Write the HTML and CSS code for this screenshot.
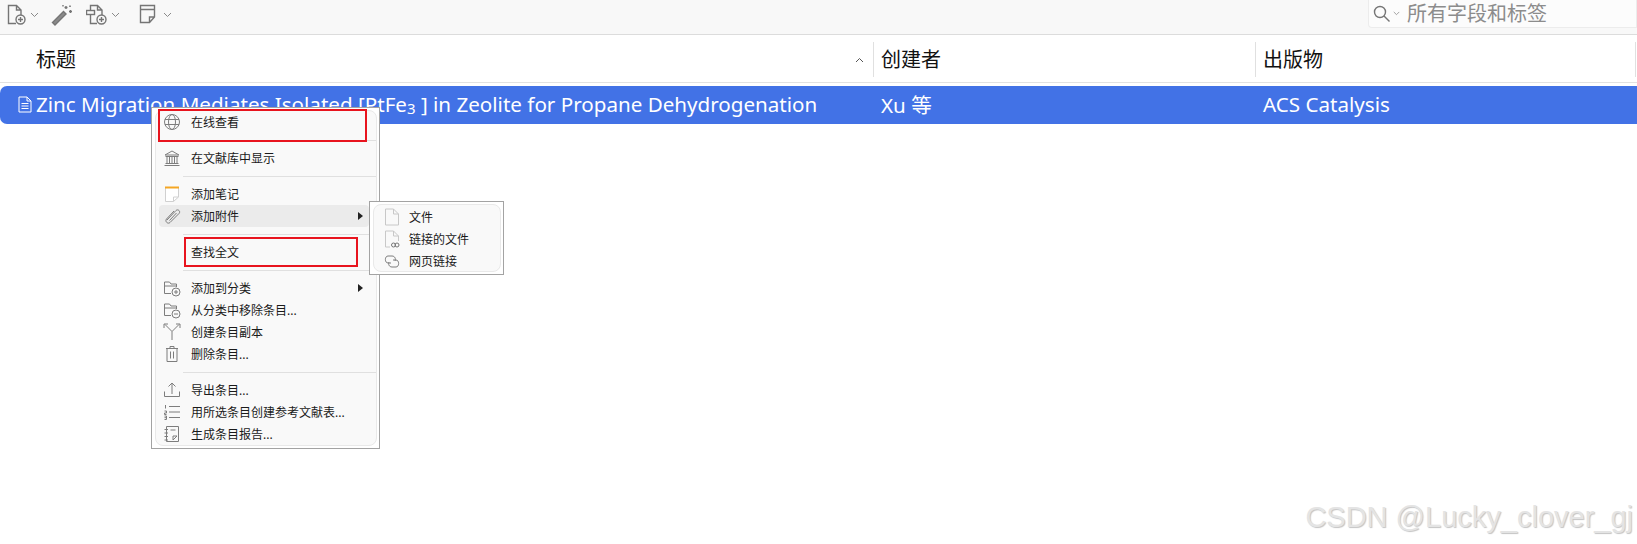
FILE: index.html
```html
<!DOCTYPE html>
<html lang="zh-CN">
<head>
    <meta charset="UTF-8">
    <title>Zotero</title>
    <link rel="stylesheet" href="styles.css">
</head>
<body>
    <div class="toolbar">
        <div class="tools">
            <button class="tool tool-new">
                <svg class="tb-icon" width="20" height="22" viewBox="0 0 20 22"><path d="M9 19.5H1.5V1.5H9.5L14 6V11M9.5 1.5V6H14"/><circle cx="13.5" cy="15.5" r="4.5"/><path d="M13.5 13V18M11 15.5H16"/></svg>
                <svg class="chev" width="9" height="6" viewBox="0 0 9 6"><path d="M1 1L4.5 4.5L8 1"/></svg>
            </button>
            <button class="tool tool-wand">
                <svg class="tb-icon" width="22" height="22" viewBox="0 0 22 22"><path d="M1.5 18.5L12.5 7.5L15 10L4 21Z" fill="#8a8a8a"/><path d="M15 2V5M13.5 3.5H16.5M19.5 6V9M18 7.5H21M19 1.5V3M18.2 2.2H19.8M12 1V2.5"/></svg>
            </button>
            <button class="tool tool-attach">
                <svg class="tb-icon" width="22" height="22" viewBox="0 0 22 22"><path d="M11 19.5H4.5V1.5H11.5L16 6V11M11.5 1.5V6H16"/><rect x="0.5" y="6.5" width="8" height="4" fill="#f8f8f8"/><circle cx="15.5" cy="15.5" r="4.5" fill="#f8f8f8"/><path d="M15.5 13V18M13 15.5H18"/></svg>
                <svg class="chev" width="9" height="6" viewBox="0 0 9 6"><path d="M1 1L4.5 4.5L8 1"/></svg>
            </button>
            <button class="tool tool-note">
                <svg class="tb-icon" width="18" height="20" viewBox="0 0 18 20"><path d="M1.5 1.5H15.5V13L10.5 18.5H1.5ZM1.5 5.5H15.5M10.5 18.5V13H15.5"/></svg>
                <svg class="chev" width="9" height="6" viewBox="0 0 9 6"><path d="M1 1L4.5 4.5L8 1"/></svg>
            </button>
        </div>
        <div class="search">
            <svg class="tb-icon" width="18" height="18" viewBox="0 0 18 18"><circle cx="7" cy="7" r="5.5"/><path d="M11 11L16.5 16.5"/></svg>
            <svg class="chev chev-small" width="7" height="5" viewBox="0 0 9 6"><path d="M1 1L4.5 4.5L8 1"/></svg>
            <span class="search-text">所有字段和标签</span>
        </div>
    </div>

    <div class="table-head">
        <div class="col col-title">标题<svg class="sort" width="9" height="6" viewBox="0 0 9 6"><path d="M1 5L4.5 1.5L8 5"/></svg></div>
        <div class="col col-creator">创建者</div>
        <div class="col col-pub">出版物</div>
    </div>

    <div class="table-row">
        <div class="cell cell-title">
            <svg class="row-icon" width="14" height="17" viewBox="0 0 14 17"><path d="M1 1H9L13 5V16H1ZM9 1V5H13M3.5 7.5H10.5M3.5 10H10.5M3.5 12.5H10.5"/></svg>
            <span>Zinc Migration Mediates Isolated [PtFe<span class="sub3">3</span> ] in Zeolite for Propane Dehydrogenation</span>
        </div>
        <div class="cell cell-creator">Xu 等</div>
        <div class="cell cell-pub">ACS Catalysis</div>
    </div>

    <div class="menu main-menu">
        <div class="panel">
            <div class="item">
                <svg class="ic" width="18" height="18" viewBox="0 0 18 18"><circle cx="9" cy="9" r="7.5"/><ellipse cx="9" cy="9" rx="3.5" ry="7.5"/><path d="M2 6.5H16M2 11.5H16"/></svg>
                在线查看
            </div>
            <div class="sep"></div>
            <div class="item">
                <svg class="ic" width="18" height="18" viewBox="0 0 18 18"><path d="M2 6L9 2L16 6ZM2.5 7.5H15.5M4 8V14M6.5 8V14M9 8V14M11.5 8V14M14 8V14M2.5 14.5H15.5M1.5 16.5H16.5"/></svg>
                在文献库中显示
            </div>
            <div class="sep"></div>
            <div class="item">
                <svg class="ic" width="18" height="18" viewBox="0 0 18 18"><path class="note-body" d="M2.5 2.5H15.5V12L10.5 16.5H2.5ZM10.5 16.5V12H15.5"/><path class="note-top" d="M2 2.5H16"/></svg>
                添加笔记
            </div>
            <div class="item active">
                <svg class="ic" width="18" height="18" viewBox="0 0 18 18"><path d="M4 13L13 3.5C15 1.5 18 4.5 16 6.5L7 15.5C5 17.5 1.5 14.5 3.5 12L11 4"/><path d="M6.5 13.5L13.5 6"/></svg>
                添加附件
                <span class="arrow"></span>
            </div>
            <div class="sep"></div>
            <div class="item">
                <span class="ic"></span>
                查找全文
            </div>
            <div class="sep"></div>
            <div class="item">
                <svg class="ic" width="18" height="18" viewBox="0 0 18 18"><path d="M8 14.5H1.5V3H6.5L8 5H13.5V8M1.5 7H13.5"/><circle cx="13" cy="13" r="4" class="ic-badge"/><path d="M11 13H15M13 11V15"/></svg>
                添加到分类
                <span class="arrow"></span>
            </div>
            <div class="item">
                <svg class="ic" width="18" height="18" viewBox="0 0 18 18"><path d="M8 14.5H1.5V3H6.5L8 5H13.5V8M1.5 7H13.5"/><circle cx="13" cy="13" r="4" class="ic-badge"/><path d="M11 13H15"/></svg>
                从分类中移除条目...
            </div>
            <div class="item">
                <svg class="ic" width="18" height="18" viewBox="0 0 18 18"><path d="M2 1.5L9 8.5L16 1.5M9 8.5V17M1 5V1H5M13 1H17V5"/></svg>
                创建条目副本
            </div>
            <div class="item">
                <svg class="ic" width="18" height="18" viewBox="0 0 18 18"><path d="M3 3.5H15M7 3.5V1.5H11V3.5M4 3.5V16.5H14V3.5M7.5 6.5V13.5M10.5 6.5V13.5"/></svg>
                删除条目...
            </div>
            <div class="sep"></div>
            <div class="item">
                <svg class="ic" width="18" height="18" viewBox="0 0 18 18"><path d="M9 13V2M5.5 5.5L9 2L12.5 5.5M1.5 10.5V15.5H16.5V10.5"/></svg>
                导出条目...
            </div>
            <div class="item">
                <svg class="ic" width="18" height="18" viewBox="0 0 18 18"><path d="M6 3.5H17M6 9H17M6 14.5H17M2.5 2V5.5M1.5 8H3.5V10H1.5V11.5H3.5M1.5 13H3.5V16.5H1.5M1.5 14.7H3.5"/></svg>
                用所选条目创建参考文献表...
            </div>
            <div class="item">
                <svg class="ic" width="18" height="18" viewBox="0 0 18 18"><path d="M3.5 1.5H15.5V16.5H3.5ZM1.5 4.5H5M1.5 8H5M1.5 11.5H5M1.5 15H5M7.5 5H12.5M10 15V11H14M10 15L14 11"/></svg>
                生成条目报告...
            </div>
        </div>
    </div>

    <div class="menu sub-menu">
        <div class="panel">
            <div class="item">
                <svg class="ic ic-light" width="16" height="18" viewBox="0 0 16 18"><path d="M1.5 1H9.5L14.5 6V17H1.5ZM9.5 1V6H14.5"/></svg>
                文件
            </div>
            <div class="item">
                <svg class="ic ic-light" width="16" height="18" viewBox="0 0 16 18"><path d="M6 17H1.5V1H9.5L14.5 6V11M9.5 1V6H14.5"/><circle class="ic-dark" cx="9.5" cy="15" r="2"/><circle class="ic-dark" cx="13" cy="15" r="2"/></svg>
                链接的文件
            </div>
            <div class="item">
                <svg class="ic" width="18" height="18" viewBox="0 0 18 18"><path d="M8 11H5C1.5 11 1.5 4 5 4H9C12 4 13 7 12 9M10 8H13C16.5 8 16.5 15 13 15H9C6 15 5 12 6 10"/></svg>
                网页链接
            </div>
        </div>
    </div>

    <div class="mark mark-view"></div>
    <div class="mark mark-find"></div>

    <div class="watermark">CSDN @Lucky_clover_gj</div>
</body>
</html>
```

FILE: styles.css
```css
* {
    box-sizing: border-box;
}
body {
    margin: 0;
    height: 544px;
    overflow: hidden;
    position: relative;
    background: #fff;
    color: #1a1a1a;
    font-family: "Noto Sans", "Noto Sans CJK SC", sans-serif;
}
svg {
    display: block;
    fill: none;
}

/* toolbar */
.toolbar {
    height: 35px;
    display: flex;
    justify-content: space-between;
    background: #f8f8f8;
    border-bottom: 1px solid #dcdcdc;
}
.tools {
    display: flex;
    padding: 4px 0 0 7px;
}
.tool {
    display: flex;
    align-items: flex-start;
    gap: 3px;
    padding: 0;
    border: 0;
    background: none;
}
.tool .chev {
    margin-top: 8px;
}
.tool-new {
    width: 44px;
}
.tool-wand {
    width: 35px;
}
.tool-attach {
    width: 53px;
}
.tool-note .chev {
    margin-left: 3px;
}
.tb-icon path,
.tb-icon circle,
.tb-icon rect {
    stroke: #757575;
    stroke-width: 1.4;
}
.chev path {
    stroke: #8a8a8a;
    stroke-width: 1;
}
.search {
    width: 269px;
    height: 28px;
    display: flex;
    align-items: center;
    padding-left: 4px;
    background: #fcfcfc;
    border: 1px solid #ececec;
    border-top: 0;
    border-radius: 0 0 0 4px;
}
.chev-small {
    margin-left: 2px;
}
.search-text {
    margin-left: 7px;
    font-size: 20px;
    line-height: 26px;
    color: #8c8c8c;
}

/* table */
.table-head {
    height: 48px;
    display: grid;
    grid-template-columns: 874px 382px 1fr;
    padding: 7px 0 5px;
    border-bottom: 1px solid #e2e2e2;
    font-size: 20px;
    color: #111;
}
.col {
    display: flex;
    align-items: center;
    line-height: 34px;
    padding-left: 7px;
    border-right: 1px solid #e0e0e0;
}
.col-title {
    justify-content: space-between;
    padding: 0 9px 0 36px;
}
.col-pub {
    margin-right: 1px;
}
.sort path {
    stroke: #555;
}
.table-row {
    height: 38px;
    margin-top: 3px;
    padding-bottom: 2px;
    display: grid;
    grid-template-columns: 873px 382px 1fr;
    align-items: center;
    background: #4272e6;
    border-radius: 7px 0 0 7px;
    color: #fff;
    font-size: 20.6px;
}
.cell {
    padding-left: 8px;
    white-space: nowrap;
}
.cell-title {
    display: flex;
    align-items: center;
    gap: 4px;
    padding-left: 18px;
}
.row-icon path {
    stroke: #fff;
    stroke-width: 1;
}
.sub3 {
    font-size: 15px;
    vertical-align: -2px;
}

/* context menus */
.menu {
    position: absolute;
    padding: 2px 2px 2px 3px;
    background: #fff;
    border: 1px solid #a3a3a3;
}
.main-menu {
    left: 151px;
    top: 107px;
    width: 229px;
    height: 342px;
}
.sub-menu {
    left: 369px;
    top: 201px;
    width: 135px;
    height: 74px;
}
.panel {
    height: 100%;
    background: #f9f9f9;
    border: 1px solid #e9e9e9;
    border-radius: 8px;
    font-size: 12px;
}
.item {
    height: 22px;
    margin: 0 7px 0 3px;
    padding: 0 4px;
    display: flex;
    align-items: center;
    gap: 10px;
    border-radius: 4px;
    white-space: nowrap;
}
.item.active {
    background: #ebebeb;
}
.arrow {
    margin-left: auto;
    margin-right: 2px;
    border-left: 5px solid #222;
    border-top: 4px solid transparent;
    border-bottom: 4px solid transparent;
}
.sep {
    height: 14px;
    margin-left: 27px;
    position: relative;
}
.sep::after {
    content: "";
    position: absolute;
    left: 0;
    right: 0;
    top: 7px;
    border-top: 1px solid #e0e0e0;
}
.ic {
    width: 18px;
    height: 18px;
    flex: none;
}
.ic path,
.ic circle,
.ic ellipse {
    stroke: #7d7d7d;
    stroke-width: 1;
}
.ic .note-body {
    stroke: #d0d0d0;
    fill: #fff;
}
.ic .note-top {
    stroke: #f5a623;
    stroke-width: 2;
}
.ic .ic-badge {
    fill: #f9f9f9;
}
.ic-light path {
    stroke: #c8c8c8;
}
.ic-light .ic-dark {
    stroke: #777;
}
.sub-menu .panel {
    padding: 1px 0;
}
.sub-menu .item {
    margin: 0 2px 0 5px;
    gap: 8px;
    padding-left: 4px;
}
.sub-menu .item .ic {
    width: 18px;
}

/* red marks drawn over the screenshot */
.mark {
    position: absolute;
    border: 2px solid #e8141e;
}
.mark-view {
    left: 158px;
    top: 109px;
    width: 209px;
    height: 33px;
}
.mark-find {
    left: 184px;
    top: 237px;
    width: 174px;
    height: 30px;
}

.watermark {
    position: absolute;
    right: 4px;
    top: 500px;
    font-family: "Liberation Sans", sans-serif;
    font-size: 29px;
    line-height: 34px;
    color: #e4e4e4;
    text-shadow: 1px 1px 1px #c4c4c4;
    white-space: nowrap;
}
```
